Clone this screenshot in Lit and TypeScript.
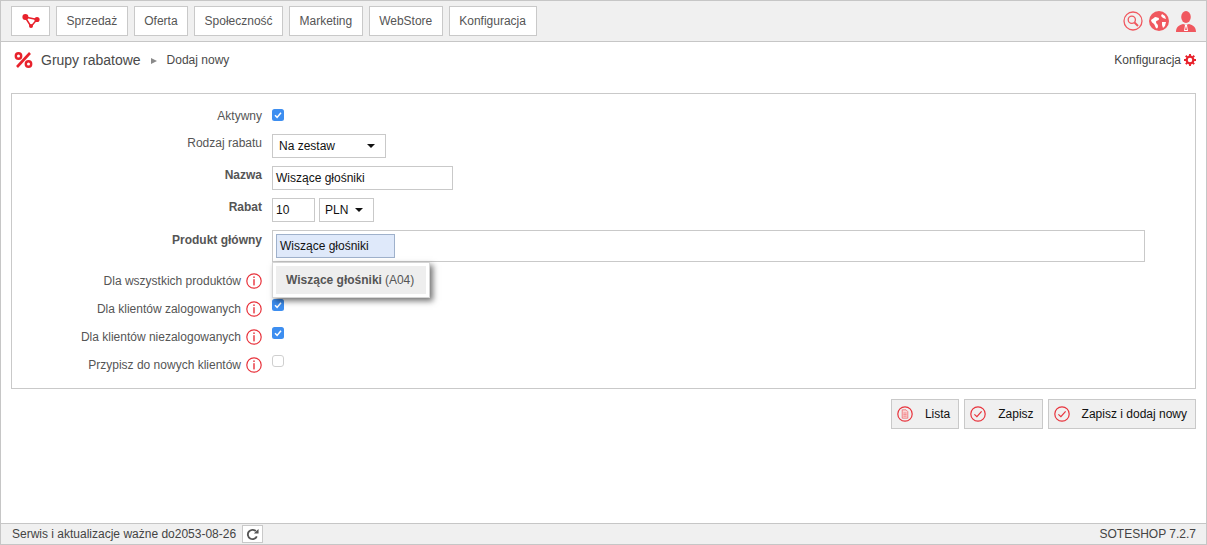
import { LitElement, html, css } from "lit";
import { customElement } from "lit/decorators.js";

const info = html`<svg class="info" viewBox="0 0 16 16" width="16" height="16"><circle cx="8" cy="8" r="7.2" fill="none" stroke="#e8333c" stroke-width="1.2"/><rect x="7.3" y="3.4" width="1.4" height="1.6" fill="#e8333c"/><rect x="7.3" y="6.2" width="1.4" height="6.2" fill="#e8333c"/></svg>`;
const check = html`<svg class="cb" viewBox="0 0 12 12" width="12" height="12"><rect width="12" height="12" rx="2.5" fill="#3d8ef0"/><path d="M3 6.3 5.1 8.4 9 3.8" fill="none" stroke="#fff" stroke-width="1.5"/></svg>`;
const uncheck = html`<svg class="cb" viewBox="0 0 12 12" width="12" height="12"><rect x=".5" y=".5" width="11" height="11" rx="2.5" fill="#fff" stroke="#cfcfcf"/></svg>`;
const okIcon = html`<svg viewBox="0 0 16 16" width="16" height="16"><circle cx="8" cy="8" r="7.2" fill="none" stroke="#e8333c" stroke-width="1.2"/><path d="M4.4 8.4 6.9 10.7 11.6 5.4" fill="none" stroke="#e8333c" stroke-width="1.2"/></svg>`;
const listIcon = html`<svg viewBox="0 0 16 16" width="16" height="16"><circle cx="8" cy="8" r="7.2" fill="none" stroke="#e8333c" stroke-width="1.2"/><path d="M5.2 3.8h3.8l1.8 1.8v6.6H5.2z" fill="#fbd5d5" stroke="#ec6a70" stroke-width=".8"/><path d="M6.4 7h3.2M6.4 8.6h3.2M6.4 10.2h3.2" stroke="#ec6a70" stroke-width=".7"/></svg>`;

@customElement("app-root")
export class AppRoot extends LitElement {
  static styles = css`
    :host { display: block; height: 545px; font-family: "Liberation Sans", Arial, sans-serif; font-size: 12px; color: #444; }
    * { box-sizing: border-box; }
    .page { height: 545px; border: 1px solid #c6c6c6; display: flex; flex-direction: column; background: #fff; overflow: hidden; }
    .top { height: 41px; flex: none; background: #f0f0f0; border-bottom: 1px solid #c6c6c6; display: flex; align-items: flex-start; padding: 5px 10px 0 10px; }
    .nav { display: flex; gap: 5.75px; }
    .nav .b { height: 30px; padding: 0 9.6px; background: #fff; border: 1px solid #c9c9c9; color: #555; display: flex; align-items: center; }
    .nav .logo { width: 39px; padding: 0; justify-content: center; margin-right: .25px; }
    .tools { margin-left: auto; display: flex; align-items: center; gap: 6px; height: 30px; }
    .crumb { height: 51px; flex: none; display: flex; align-items: center; padding: 0 10px 15px 13px; }
    .crumb .title { font-size: 14px; color: #4a4a4a; margin-left: 7px; }
    .crumb .arrow { width: 0; height: 0; border-left: 6px solid #8a8a8a; border-top: 3.5px solid transparent; border-bottom: 3.5px solid transparent; margin: 1px 11px 0 10px; }
    .crumb .sub { color: #4a4a4a; margin-left: -1px; }
    .crumb .cfg { margin-left: auto; display: flex; align-items: center; gap: 3px; color: #444; }
    .form { margin: 0 10px; height: 296px; border: 1px solid #c9c9c9; padding-top: 1px; flex: none; }
    .row { display: flex; position: relative; }
    .lab { width: 250px; flex: none; display: flex; justify-content: flex-end; align-items: center; gap: 5px; color: #555; }
    .lab.bold { font-weight: bold; color: #555; }
    .ctl { margin-left: 10px; display: flex; gap: 4px; align-items: center; }
    .box { height: 24px; border: 1px solid #c9c9c9; background: #fff; color: #111; display: flex; align-items: center; padding: 0 3px; }
    .caret { width: 0; height: 0; border-top: 4px solid #111; border-left: 4px solid transparent; border-right: 4px solid transparent; }
    .sel { justify-content: space-between; padding: 0 10px 0 6px; }
    .w114 { width: 114px; }
    .w181 { width: 181px; }
    .w43 { width: 43px; }
    .w55 { width: 55px; padding-left: 5px; }
    .r1 { height: 25px; margin-top: 8px; }
    .r1 .ctl { margin-top: -1px; }
    .r2, .r3, .r4, .r5 { margin-top: 8px; }
    .r2 { margin-top: 6px; }
    .r2 .lab, .r3 .lab, .r4 .lab { align-items: flex-start; padding-top: 2px; }
    .r5 .lab { align-items: flex-start; padding-top: 3px; }
    .multi { width: 873px; height: 32px; border: 1px solid #c9c9c9; padding: 3px; }
    .tag { width: 119px; height: 24px; background: #dfe9fa; border: 1px solid #9fb1cb; color: #111; display: flex; align-items: center; padding-left: 3px; }
    .opt { height: 28px; }
    .opt .ctl { align-items: flex-start; padding-top: 4px; }
    .o1 { margin-top: 5px; }
    .pop { position: absolute; left: 260px; top: -5px; width: 158px; height: 36px; background: #fff; border: 1px solid #d5d5d5; padding: 3px; box-shadow: 3px 3px 6px rgba(0,0,0,.55); z-index: 2; }
    .pop div { height: 28px; background: #eee; display: flex; align-items: center; padding-left: 10px; color: #555; white-space: nowrap; }
    .pop b { margin-right: 3px; }
    .actions { display: flex; justify-content: flex-end; gap: 5px; margin: 10px 10px 0 0; flex: none; }
    .btn { height: 30px; border: 1px solid #c9c9c9; background: #f0f0f0; color: #111; display: flex; align-items: center; padding: 0 8px 0 5px; gap: 12px; }
    .foot { margin-top: auto; height: 21px; flex: none; background: #f0f0f0; border-top: 1px solid #c6c6c6; display: flex; align-items: center; padding: 0 10px 0 11px; color: #444; }
    .refresh { width: 21px; height: 18px; background: #fff; border: 1px solid #c9c9c9; margin-left: 6px; display: flex; align-items: center; justify-content: center; }
    .ver { margin-left: auto; }
    .usr { margin-left: 1px; }
  `;

  render() {
    return html`<div class="page">
      <div class="top">
        <div class="nav">
          <div class="b logo"><svg viewBox="0 0 18 14" width="18" height="14"><path d="M3 3 15 5.5 9 12.5z" fill="none" stroke="#e8222c" stroke-width="1.5"/><circle cx="3.4" cy="3" r="3" fill="#e8222c"/><circle cx="15" cy="5.5" r="2.6" fill="#e8222c"/><circle cx="9" cy="12" r="2" fill="#e8222c"/></svg></div>
          <div class="b">Sprzedaż</div><div class="b">Oferta</div><div class="b">Społeczność</div><div class="b">Marketing</div><div class="b">WebStore</div><div class="b">Konfiguracja</div>
        </div>
        <div class="tools">
          <svg viewBox="0 0 20 20" width="20" height="20"><circle cx="10" cy="10" r="9" fill="none" stroke="#f0585f" stroke-width="1.3"/><circle cx="8.8" cy="8.8" r="3.6" fill="none" stroke="#f0585f" stroke-width="1.3"/><path d="M11.5 11.5 15 15" stroke="#f0585f" stroke-width="2"/></svg>
          <svg viewBox="0 0 20 20" width="20" height="20"><circle cx="10" cy="10" r="10" fill="#f0585f"/><path d="M2 9c2-1 3-3 5-3 1 1 3 0 3 2s-3 1-3 3 2 2 2 4-1 3-2 2-1-3-2-4-3-2-3-4zM13 3l3 2 1 3-3-1-2-2zM13 11h4l-1 4-2 2-1-3z" fill="#fff"/></svg>
          <svg class="usr" viewBox="0 0 20 21" width="20" height="21"><ellipse cx="10" cy="6" rx="4.8" ry="6" fill="#f0585f"/><path d="M0 21c0-5 3-7 7-8l3 1 3-1c4 1 7 3 7 8z" fill="#f0585f"/><path d="M9 14h2l1 6H8z" fill="#fff"/><path d="M10 15l1 4h-2z" fill="#f0585f"/></svg>
        </div>
      </div>
      <div class="crumb">
        <svg viewBox="0 0 20 16" width="20" height="16"><circle cx="4.5" cy="4" r="2.7" fill="none" stroke="#e8222c" stroke-width="2.4"/><circle cx="14.5" cy="12" r="2.7" fill="none" stroke="#e8222c" stroke-width="2.4"/><path d="M16 1 3 15" stroke="#e8222c" stroke-width="2.6"/></svg>
        <span class="title">Grupy rabatowe</span><span class="arrow"></span><span class="sub">Dodaj nowy</span>
        <span class="cfg">Konfiguracja <svg viewBox="0 0 14 14" width="12" height="12"><circle cx="7" cy="7" r="3.9" fill="none" stroke="#e8222c" stroke-width="2.6"/><path d="M7 0v14M0 7h14M2 2l10 10M12 2 2 12" stroke="#e8222c" stroke-width="2.2" stroke-dasharray="2.4 9.2 2.4"/></svg></span>
      </div>
      <div class="form">
        <div class="row r1"><div class="lab">Aktywny</div><div class="ctl">${check}</div></div>
        <div class="row r2"><div class="lab">Rodzaj rabatu</div><div class="ctl"><div class="box sel w114">Na zestaw <span class="caret"></span></div></div></div>
        <div class="row r3"><div class="lab bold">Nazwa</div><div class="ctl"><div class="box w181">Wiszące głośniki</div></div></div>
        <div class="row r4"><div class="lab bold">Rabat</div><div class="ctl"><div class="box w43">10</div><div class="box sel w55">PLN <span class="caret"></span></div></div></div>
        <div class="row r5"><div class="lab bold">Produkt główny</div><div class="ctl"><div class="multi"><div class="tag">Wiszące głośniki</div></div></div></div>
        <div class="row opt o1"><div class="lab">Dla wszystkich produktów ${info}</div>
          <div class="pop"><div><b>Wiszące głośniki</b> (A04)</div></div></div>
        <div class="row opt"><div class="lab">Dla klientów zalogowanych ${info}</div><div class="ctl">${check}</div></div>
        <div class="row opt"><div class="lab">Dla klientów niezalogowanych ${info}</div><div class="ctl">${check}</div></div>
        <div class="row opt"><div class="lab">Przypisz do nowych klientów ${info}</div><div class="ctl">${uncheck}</div></div>
      </div>
      <div class="actions">
        <div class="btn">${listIcon}Lista</div><div class="btn">${okIcon}Zapisz</div><div class="btn">${okIcon}Zapisz i dodaj nowy</div>
      </div>
      <div class="foot">Serwis i aktualizacje ważne do2053-08-26<span class="refresh"><svg viewBox="0 0 14 14" width="13" height="13"><path d="M11.6 9A5 5 0 1 1 10.5 3.4" fill="none" stroke="#555" stroke-width="2"/><path d="M8.5 5.8h5V1z" fill="#555"/></svg></span><span class="ver">SOTESHOP 7.2.7</span></div>
    </div>`;
  }
}
